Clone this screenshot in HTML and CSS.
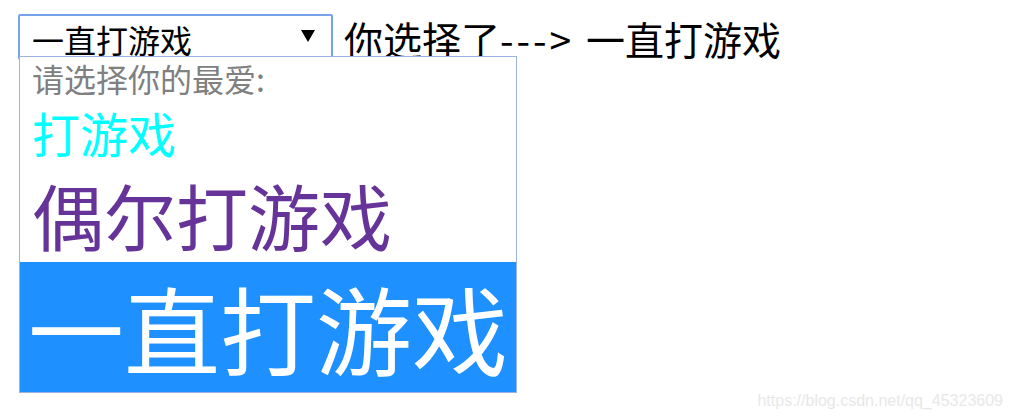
FILE: index.html
```html
<!DOCTYPE html>
<html lang="zh">
<head>
<meta charset="utf-8">
<title>select</title>
<link rel="stylesheet" href="styles.css">
</head>
<body>
<div class="page">
  <div class="select-wrap">
    <div class="select">
      <span class="select-value">一直打游戏</span>
      <span class="arrow"></span>
    </div>
    <div class="dropdown">
      <div class="opt opt-placeholder">请选择你的最爱:</div>
      <div class="opt opt-small">打游戏</div>
      <div class="opt opt-mid">偶尔打游戏</div>
      <div class="opt opt-big selected">一直打游戏</div>
    </div>
  </div>
  <div class="result">你选择了<span class="arrow-text">---&gt; </span>一直打游戏</div>
</div>
<div class="watermark">https://blog.csdn.net/qq_45323609</div>
</body>
</html>
```

FILE: styles.css
```css
html, body {
  margin: 0;
  padding: 0;
  background: #ffffff;
  width: 1013px;
  height: 419px;
  overflow: hidden;
  font-family: "Noto Sans CJK SC", "Noto Sans", sans-serif;
}

.page {
  display: flex;
  align-items: flex-start;
  padding: 14px 0 0 18px;
  gap: 11px;
}

.select-wrap {
  position: relative;
}

.select {
  box-sizing: border-box;
  width: 315px;
  height: 46px;
  border: 2px solid #76a3ea;
  border-radius: 2px;
  display: flex;
  align-items: center;
  justify-content: space-between;
  padding: 0 16px 0 12px;
}

.select-value {
  font-size: 32px;
  line-height: 28px;
  color: #000;
  margin-top: 4px;
}

.arrow {
  width: 0;
  height: 0;
  border-left: 7px solid transparent;
  border-right: 7px solid transparent;
  border-top: 12px solid #000;
  margin-bottom: 2px;
}

.dropdown {
  position: absolute;
  left: 1px;
  top: 42px;
  width: 498px;
  box-sizing: border-box;
  border: 1px solid #9db3e2;
  background: #fff;
}

.opt {
  line-height: 1.35;
  padding-left: 12px;
  white-space: nowrap;
}

.opt-placeholder {
  font-size: 32px;
  color: #808080;
}

.opt-small {
  font-size: 48px;
  color: #00ffff;
}

.opt-mid {
  font-size: 72px;
  color: #663399;
}

.opt-big {
  font-size: 96px;
  padding-left: 8px;
}

.selected {
  background: #1e90ff;
  color: #ffffff;
}

.result {
  font-size: 39px;
  line-height: 46px;
  color: #000;
  margin-top: 1px;
}

.arrow-text {
  letter-spacing: 3px;
}

.watermark {
  position: absolute;
  right: 10px;
  bottom: 9px;
  font-family: "Liberation Sans", Arial, sans-serif;
  font-size: 16px;
  color: #e8e8e8;
}
```
